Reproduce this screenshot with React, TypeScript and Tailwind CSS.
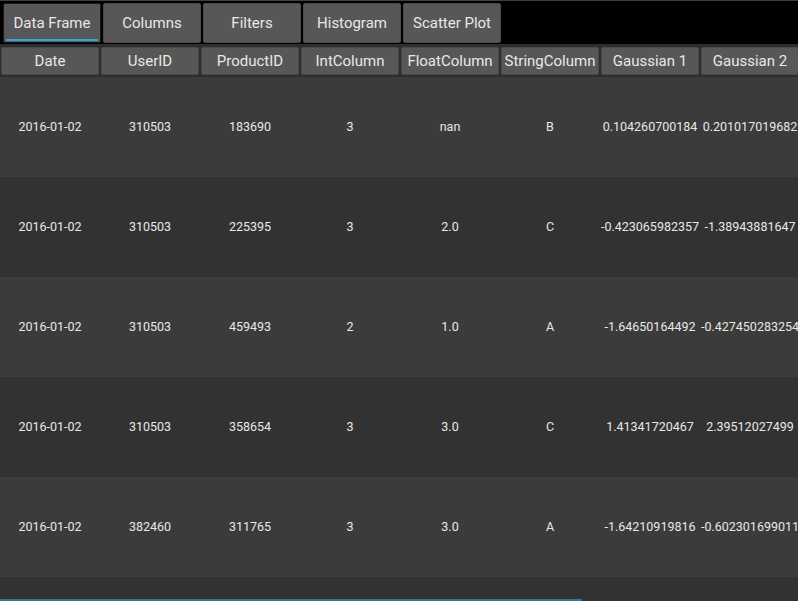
const TABS = ['Data Frame', 'Columns', 'Filters', 'Histogram', 'Scatter Plot'];
const COLUMNS = ['Date', 'UserID', 'ProductID', 'IntColumn', 'FloatColumn', 'StringColumn', 'Gaussian 1', 'Gaussian 2'];

const ROWS = [
  ['2016-01-02', '310503', '183690', '3', 'nan', 'B', '0.104260700184', '0.201017019682'],
  ['2016-01-02', '310503', '225395', '3', '2.0', 'C', '-0.423065982357', '-1.38943881647'],
  ['2016-01-02', '310503', '459493', '2', '1.0', 'A', '-1.64650164492', '-0.427450283254'],
  ['2016-01-02', '310503', '358654', '3', '3.0', 'C', '1.41341720467', '2.39512027499'],
  ['2016-01-02', '382460', '311765', '3', '3.0', 'A', '-1.64210919816', '-0.602301699011'],
  ['', '', '', '', '', '', '', ''],
];

export default function App() {
  return (
    <div className="relative h-[601px] w-[798px] overflow-hidden bg-[#2e2e2e] font-['Roboto','Liberation_Sans',sans-serif] text-[#e8e8e8]">
      <div className="flex h-[44px] gap-[2px] border-t border-[#3e3e3e] bg-black pl-[3px] pt-[2px]">
        {TABS.map((t, i) => (
          <div
            key={t}
            className={`relative flex h-[40px] w-[98px] shrink-0 items-center justify-center rounded-[2px] bg-[#575757] text-[15px] ${i === 0 ? 'border border-[#1a1a1a]' : 'border border-[#4a4a4a]'}`}
          >
            {t}
            {i === 0 && <div className="absolute bottom-[1px] left-[2px] right-[2px] h-[2px] bg-[#33a5d8]" />}
          </div>
        ))}
      </div>

      <div className="flex h-[33px] pt-[3px]">
        {COLUMNS.map((c) => (
          <div key={c} className="w-[100px] shrink-0 px-[1px]">
            <div className="flex h-[28px] items-center justify-center whitespace-nowrap rounded-[2px] border border-[#4a4a4a] bg-[#575757] text-[15px]">
              {c}
            </div>
          </div>
        ))}
      </div>

      <div className="flex flex-col">
        {ROWS.map((r, i) => (
          <div key={i} className={`flex h-[100px] shrink-0 ${i % 2 === 0 ? 'bg-[#3b3b3b]' : 'bg-[#323232]'}`}>
            {r.map((v, j) => (
              <div key={j} className="flex w-[100px] shrink-0 items-center justify-center whitespace-nowrap text-[12.5px]">
                {v}
              </div>
            ))}
          </div>
        ))}
      </div>

      <div className="absolute bottom-0 left-0 h-[2px] w-[582px] bg-[#2f7a92]" />
    </div>
  );
}
